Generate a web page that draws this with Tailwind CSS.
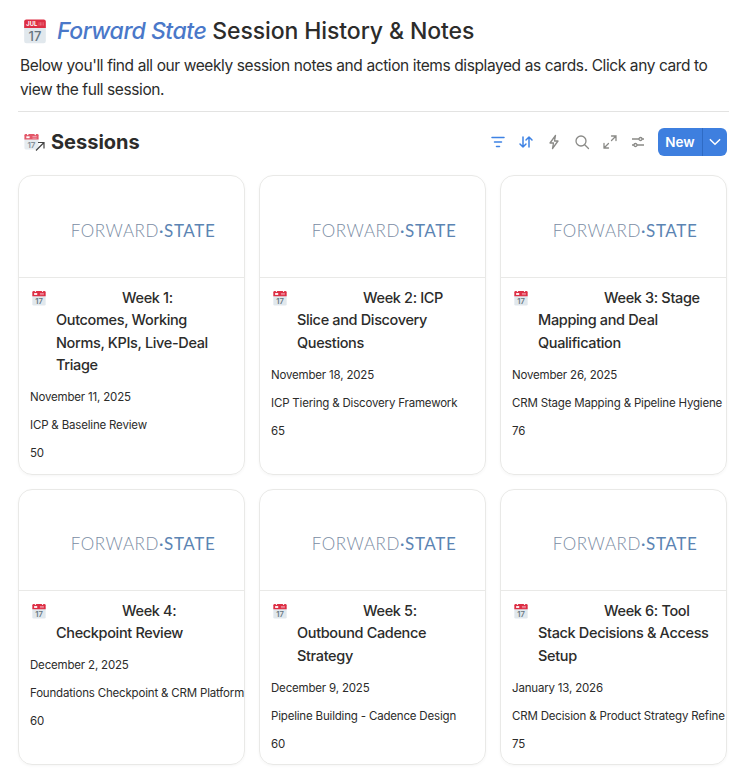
<!DOCTYPE html>
<html lang="en">
<head>
  <meta charset="UTF-8">
  <meta name="viewport" content="width=device-width, initial-scale=1.0">
  <title>Forward State Session History &amp; Notes</title>
  <script src="https://cdn.jsdelivr.net/npm/@tailwindcss/browser@4"></script>
</head>
<body class="bg-white font-['Inter',sans-serif] text-[#2c2c2b] overflow-hidden h-[774px]">
  <svg class="hidden">
    <symbol id="cal" viewBox="0 0 36 36">
      <path d="M3 10h30v22a3 3 0 0 1-3 3H6a3 3 0 0 1-3-3z" fill="#e1e8ed"/>
      <path d="M6 2h24a3 3 0 0 1 3 3v9H3V5a3 3 0 0 1 3-3z" fill="#dd2e44"/>
      <circle cx="10" cy="3" r="1.6" fill="#fff"/><circle cx="26" cy="3" r="1.6" fill="#fff"/>
      <rect x="7" y="7" width="7" height="4" fill="#fff"/>
      <rect x="20" y="7" width="9" height="1.5" fill="#f4abba"/><rect x="20" y="10" width="9" height="1.5" fill="#f4abba"/>
      <text x="18" y="31" font-size="17" font-weight="600" text-anchor="middle" fill="#66757f">17</text>
    </symbol>
  </svg>

  <div class="pl-[18px] pr-[28px]">
    <h1 class="flex items-center pl-[4px] pt-[18px] h-[44px] text-[23px] font-medium leading-[30px]">
      <svg class="w-[26px] h-[26px] mr-[9px] shrink-0" viewBox="0 0 36 36">
        <path d="M3 10h30v22a3 3 0 0 1-3 3H6a3 3 0 0 1-3-3z" fill="#e1e8ed"/>
        <path d="M6 2h24a3 3 0 0 1 3 3v9H3V5a3 3 0 0 1 3-3z" fill="#dd2e44"/>
        <text x="6" y="11.500" font-size="8" font-weight="700" fill="#fff">JUL</text>
        <path d="M23 7h7M23 9.500h7" stroke="#f4abba" stroke-width="1.200" stroke-dasharray="1.200 .8"/>
        <text x="18" y="31.500" font-size="18" font-weight="500" text-anchor="middle" fill="#66757f">17</text>
      </svg>
      <span class="italic text-[#4a78c9] mr-[6px] tracking-[-0.45px]">Forward State</span>
      <span class="tracking-[-0.1px]">Session History &amp; Notes</span>
    </h1>
    <p class="pl-[2px] pt-[9.500px] text-[15.500px] leading-[24px] h-[67px] text-[#2c2c2b] tracking-[-0.4px]">Below you'll find all our weekly session notes and action items displayed as cards. Click any card to view the full session.</p>
    <div class="h-px bg-[#e3e3e2] w-[711px] mb-[16px]"></div>

    <div class="flex items-center justify-between h-[28px] mb-[19px]">
      <h2 class="flex items-center pl-[5px] text-[20px] font-bold leading-[28px]">
        <span class="relative w-[22px] h-[18px] mr-[6px] block">
          <svg class="w-[17px] h-[17px] opacity-80"><use href="#cal"/></svg>
          <svg class="absolute left-[12px] top-[8px] w-[10px] h-[10px]" viewBox="0 0 10 10" fill="none" stroke="#444" stroke-width="1.2"><path d="M1 9.500 8.500 2M3 1.500h6v6"/></svg>
        </span>
        Sessions
      </h2>
      <div class="flex items-center">
        <svg class="w-[16px] h-[16px] mr-[12px]" viewBox="0 0 16 16" fill="none" stroke="#3e82e4" stroke-width="1.500" stroke-linecap="round"><path d="M2 3.500h12M4.500 8h7M6.500 12.500h3"/></svg>
        <svg class="w-[16px] h-[16px] mr-[12px]" viewBox="0 0 16 16" fill="none" stroke="#3e82e4" stroke-width="1.500" stroke-linecap="round" stroke-linejoin="round"><path d="M5 3v10M2 10l3 3 3-3M11 13V3M8 6l3-3 3 3"/></svg>
        <svg class="w-[16px] h-[16px] mr-[12px]" viewBox="0 0 16 16" fill="none" stroke="#8a8a87" stroke-width="1.300" stroke-linejoin="round"><path d="M9.500 1.500 4 9h3.500l-1 5.500L12 7H8.500z"/></svg>
        <svg class="w-[16px] h-[16px] mr-[12px]" viewBox="0 0 16 16" fill="none" stroke="#8a8a87" stroke-width="1.300" stroke-linecap="round"><circle cx="7" cy="7" r="5"/><path d="m10.700 10.700 3.800 3.800"/></svg>
        <svg class="w-[16px] h-[16px] mr-[12px]" viewBox="0 0 16 16" fill="none" stroke="#8a8a87" stroke-width="1.300" stroke-linecap="round"><path d="M9.500 6.500 14 2M9.500 2H14v4.500M6.500 9.500 2 14M2 9.500V14h4.500"/></svg>
        <svg class="w-[16px] h-[16px] mr-[12px]" viewBox="0 0 16 16" fill="none" stroke="#8a8a87" stroke-width="1.300"><path d="M2 5h7M12 5h2M2 11h2M7 11h7"/><circle cx="10.500" cy="5" r="1.500"/><circle cx="5.500" cy="11" r="1.500"/></svg>
        <div class="flex h-[28px] w-[69px] rounded-[6px] bg-[#3e7fdf] text-white text-[13.500px] font-semibold">
          <span class="w-[45px] flex items-center justify-center border-r border-[#2f6bc4]">New</span>
          <span class="flex-1 flex items-center justify-center">
            <svg class="w-[14px] h-[14px]" viewBox="0 0 12 12" fill="none" stroke="#fff" stroke-width="1.300" stroke-linecap="round" stroke-linejoin="round"><path d="m2 4 4 4 4-4"/></svg>
          </span>
        </div>
      </div>
    </div>

    <div class="grid grid-cols-3 gap-[14px] w-[709px]">

      <article class="relative rounded-[14px] border border-[#e9e9e7] shadow-[0_1px_3px_rgba(0,0,0,0.04)] overflow-hidden h-[300px]">
        <div class="h-[102px] border-b border-[#e9e9e7] flex items-center justify-center pl-[23px] pt-[8px] font-['Lato',sans-serif] font-light text-[17px] tracking-[0.6px]"><span class="text-[#7a8ca3]">FORWARD</span><span class="text-[#5b84b3] font-normal">·STATE</span></div>
        <svg class="absolute left-[12px] top-[114px] w-[16px] h-[16px]"><use href="#cal"/></svg>
        <h3 class="pl-[37px] pr-[10px] pt-[8.500px] text-[14.500px] font-medium leading-[22.500px] tracking-[-0.35px] indent-[66px]">Week 1: Outcomes, Working Norms, KPIs, Live-Deal Triage</h3>
        <div class="pl-[11px] pt-[6.500px] text-[11.500px] leading-[28px] tracking-[-0.18px] whitespace-nowrap"><p>November 11, 2025</p><p>ICP &amp; Baseline Review</p><p>50</p></div>
      </article>

      <article class="relative rounded-[14px] border border-[#e9e9e7] shadow-[0_1px_3px_rgba(0,0,0,0.04)] overflow-hidden h-[300px]">
        <div class="h-[102px] border-b border-[#e9e9e7] flex items-center justify-center pl-[23px] pt-[8px] font-['Lato',sans-serif] font-light text-[17px] tracking-[0.6px]"><span class="text-[#7a8ca3]">FORWARD</span><span class="text-[#5b84b3] font-normal">·STATE</span></div>
        <svg class="absolute left-[12px] top-[114px] w-[16px] h-[16px]"><use href="#cal"/></svg>
        <h3 class="pl-[37px] pr-[18px] pt-[8.500px] text-[14.500px] font-medium leading-[22.500px] tracking-[-0.35px] indent-[66px]">Week 2: ICP Slice and Discovery Questions</h3>
        <div class="pl-[11px] pt-[6.500px] text-[11.500px] leading-[28px] tracking-[-0.18px] whitespace-nowrap"><p>November 18, 2025</p><p>ICP Tiering &amp; Discovery Framework</p><p>65</p></div>
      </article>

      <article class="relative rounded-[14px] border border-[#e9e9e7] shadow-[0_1px_3px_rgba(0,0,0,0.04)] overflow-hidden h-[300px]">
        <div class="h-[102px] border-b border-[#e9e9e7] flex items-center justify-center pl-[23px] pt-[8px] font-['Lato',sans-serif] font-light text-[17px] tracking-[0.6px]"><span class="text-[#7a8ca3]">FORWARD</span><span class="text-[#5b84b3] font-normal">·STATE</span></div>
        <svg class="absolute left-[12px] top-[114px] w-[16px] h-[16px]"><use href="#cal"/></svg>
        <h3 class="pl-[37px] pr-[18px] pt-[8.500px] text-[14.500px] font-medium leading-[22.500px] tracking-[-0.35px] indent-[66px]">Week 3: Stage Mapping and Deal Qualification</h3>
        <div class="pl-[11px] pt-[6.500px] text-[11.500px] leading-[28px] tracking-[-0.18px] whitespace-nowrap"><p>November 26, 2025</p><p>CRM Stage Mapping &amp; Pipeline Hygiene</p><p>76</p></div>
      </article>

      <article class="relative rounded-[14px] border border-[#e9e9e7] shadow-[0_1px_3px_rgba(0,0,0,0.04)] overflow-hidden h-[276px]">
        <div class="h-[101px] border-b border-[#e9e9e7] flex items-center justify-center pl-[23px] pt-[8px] font-['Lato',sans-serif] font-light text-[17px] tracking-[0.6px]"><span class="text-[#7a8ca3]">FORWARD</span><span class="text-[#5b84b3] font-normal">·STATE</span></div>
        <svg class="absolute left-[12px] top-[113px] w-[16px] h-[16px]"><use href="#cal"/></svg>
        <h3 class="pl-[37px] pr-[18px] pt-[8.500px] text-[14.500px] font-medium leading-[22.500px] tracking-[-0.35px] indent-[66px]">Week 4: Checkpoint Review</h3>
        <div class="pl-[11px] pt-[6.500px] text-[11.500px] leading-[28px] tracking-[-0.18px] whitespace-nowrap"><p>December 2, 2025</p><p>Foundations Checkpoint &amp; CRM Platform</p><p>60</p></div>
      </article>

      <article class="relative rounded-[14px] border border-[#e9e9e7] shadow-[0_1px_3px_rgba(0,0,0,0.04)] overflow-hidden h-[276px]">
        <div class="h-[101px] border-b border-[#e9e9e7] flex items-center justify-center pl-[23px] pt-[8px] font-['Lato',sans-serif] font-light text-[17px] tracking-[0.6px]"><span class="text-[#7a8ca3]">FORWARD</span><span class="text-[#5b84b3] font-normal">·STATE</span></div>
        <svg class="absolute left-[12px] top-[113px] w-[16px] h-[16px]"><use href="#cal"/></svg>
        <h3 class="pl-[37px] pr-[18px] pt-[8.500px] text-[14.500px] font-medium leading-[22.500px] tracking-[-0.35px] indent-[66px]">Week 5: Outbound Cadence Strategy</h3>
        <div class="pl-[11px] pt-[6.500px] text-[11.500px] leading-[28px] tracking-[-0.18px] whitespace-nowrap"><p>December 9, 2025</p><p>Pipeline Building - Cadence Design</p><p>60</p></div>
      </article>

      <article class="relative rounded-[14px] border border-[#e9e9e7] shadow-[0_1px_3px_rgba(0,0,0,0.04)] overflow-hidden h-[276px]">
        <div class="h-[101px] border-b border-[#e9e9e7] flex items-center justify-center pl-[23px] pt-[8px] font-['Lato',sans-serif] font-light text-[17px] tracking-[0.6px]"><span class="text-[#7a8ca3]">FORWARD</span><span class="text-[#5b84b3] font-normal">·STATE</span></div>
        <svg class="absolute left-[12px] top-[113px] w-[16px] h-[16px]"><use href="#cal"/></svg>
        <h3 class="pl-[37px] pr-[10px] pt-[8.500px] text-[14.500px] font-medium leading-[22.500px] tracking-[-0.35px] indent-[66px]">Week 6: Tool Stack Decisions &amp; Access Setup</h3>
        <div class="pl-[11px] pt-[6.500px] text-[11.500px] leading-[28px] tracking-[-0.18px] whitespace-nowrap"><p>January 13, 2026</p><p>CRM Decision &amp; Product Strategy Refine</p><p>75</p></div>
      </article>

    </div>
  </div>
</body>
</html>
